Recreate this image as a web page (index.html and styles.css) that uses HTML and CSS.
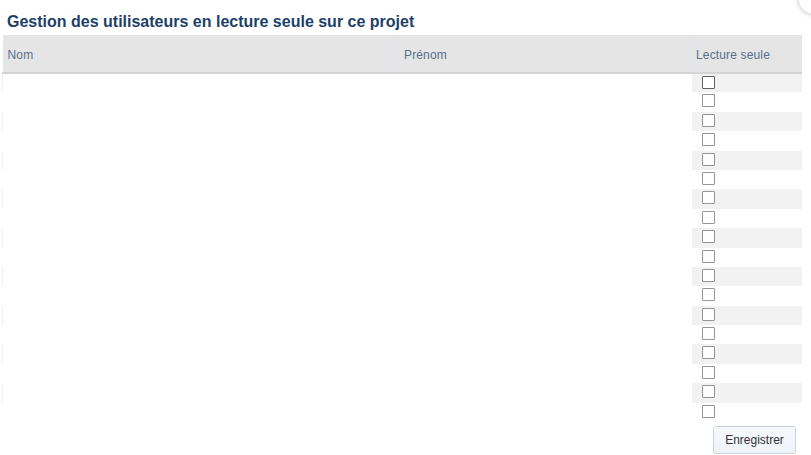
FILE: index.html
```html
<!DOCTYPE html>
<html lang="fr">
<head>
    <meta charset="UTF-8">
    <title>Lecture seule</title>
    <link rel="stylesheet" href="styles.css">
</head>
<body>
    <div class="dialog">
        <span class="close-btn"></span>
        <h2 class="title">Gestion des utilisateurs en lecture seule sur ce projet</h2>

        <table class="users">
            <thead>
                <tr>
                    <th class="col-nom">Nom</th>
                    <th class="col-prenom">Prénom</th>
                    <th class="col-lecture">Lecture seule</th>
                </tr>
            </thead>
            <tbody id="usersBody"></tbody>
        </table>

        <div class="actions">
            <button type="button" class="btn">Enregistrer</button>
        </div>
    </div>

    <script>
        var tbody = document.getElementById('usersBody');
        for (var i = 0; i < 18; i++) {
            var row = tbody.insertRow(i);
            row.insertCell(0);
            row.insertCell(1);
            var cell = row.insertCell(2);
            var box = document.createElement('input');
            box.type = 'checkbox';
            if (i === 0) box.className = 'first';
            cell.appendChild(box);
        }
    </script>
</body>
</html>
```

FILE: styles.css
```css
* {
    margin: 0;
    padding: 0;
    box-sizing: border-box;
}

body {
    background-color: #fff;
    font-family: "Liberation Sans", Arial, sans-serif;
    overflow: hidden;
}

.dialog {
    position: relative;
    width: 811px;
    height: 455px;
    padding: 12px 9px 0 2px;
}

.close-btn {
    position: absolute;
    top: -14px;
    right: -20px;
    width: 32px;
    height: 28px;
    border-radius: 50%;
    background-color: #fff;
    box-shadow: -1px 1px 4px rgba(0, 0, 0, 0.18);
}

.title {
    font-size: 16px;
    font-weight: bold;
    line-height: 20px;
    color: #1d3f68;
    margin: 0 0 3px 5px;
}

.users {
    width: 800px;
    border-collapse: collapse;
    table-layout: fixed;
}

.users th {
    height: 38px;
    background-color: #e5e5e5;
    border-bottom: 2px solid #d4d4d4;
    font-size: 12px;
    font-weight: normal;
    letter-spacing: 0.15px;
    color: #56708b;
    text-align: left;
    padding: 2px 5px 0 5px;
}

.users th + th {
    border-left: 1px solid #d9e5f0;
}

.users th.col-lecture {
    padding-left: 4px;
}

.col-nom {
    width: 396px;
}

.col-prenom {
    width: 293px;
}

.users td {
    height: 19.4px;
    padding: 0;
    vertical-align: top;
}

.users td:last-child {
    padding: 2px 0 0 10px;
}

.users tbody tr:nth-child(odd) td:first-child {
    border-left: 1px solid #f0f0f0;
}

.users tbody tr:nth-child(odd) td:last-child {
    background-color: #f2f2f2;
}

.users input[type="checkbox"] {
    appearance: none;
    -webkit-appearance: none;
    display: block;
    width: 13px;
    height: 13px;
    border: 1px solid #959595;
    border-radius: 1px;
    background-color: #fff;
}

.users input.first {
    border-color: #606060;
}

.actions {
    display: flex;
    justify-content: flex-end;
    padding: 4px 6px 0 0;
}

.btn {
    width: 83px;
    height: 28px;
    font-family: "Liberation Sans", Arial, sans-serif;
    font-size: 12px;
    color: #333;
    background: linear-gradient(#f7f9fc, #eef3f8);
    border: 1px solid #c7d2de;
    border-radius: 3px;
    cursor: pointer;
}
```
